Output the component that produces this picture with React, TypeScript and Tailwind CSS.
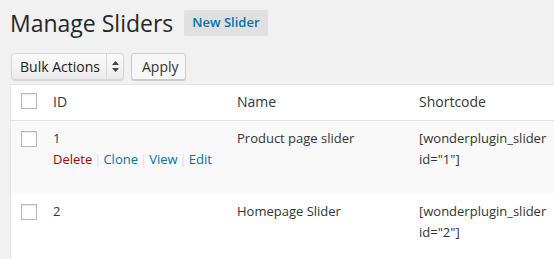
import React from 'react';

interface SliderRow {
  id: number;
  name: string;
}

const rows: SliderRow[] = [
  { id: 1, name: 'Product page slider' },
  { id: 2, name: 'Homepage Slider' },
];

const font = { fontFamily: '"Open Sans", "Noto Sans", sans-serif' };

const Checkbox: React.FC = () => (
  <div className="w-4 h-4 border border-[#b4b9be] bg-white shadow-[inset_0_1px_2px_rgba(0,0,0,0.1)]" />
);

const App: React.FC = () => {
  return (
    <div className="w-[554px] h-[259px] overflow-hidden bg-[#f1f1f1] text-[#333]" style={font}>
      <div className="pl-[10px]">
        {/* Title */}
        <div className="flex items-center h-[44px] pt-[1px]">
          <h1 className="text-[23px] leading-[30px] text-[#23282d] font-normal">Manage Sliders</h1>
          <span className="ml-[11px] h-[26px] px-[8px] flex items-center bg-[#e0e0e0] rounded-[2px] text-[13px] font-semibold text-[#0073aa]">
            New Slider
          </span>
        </div>

        {/* Bulk actions */}
        <div className="flex items-center gap-[7px] mt-[9px] ml-[1px]">
          <div className="flex items-center h-[27px] w-[113px] rounded-[4px] border border-[#d6d6d6] bg-gradient-to-b from-[#fafafa] to-[#ececec] shadow-[0_1px_1px_rgba(0,0,0,0.12)]">
            <span className="pl-[8px] text-[14px] text-[#222] leading-none w-[94px]">Bulk Actions</span>
            <div className="h-full border-l border-[#d6d6d6] flex-1 flex items-center justify-center">
              <svg width="7" height="11" viewBox="0 0 7 11">
                <path d="M3.5 0 L7 4 L0 4 Z" fill="#444" />
                <path d="M0 7 L7 7 L3.5 11 Z" fill="#444" />
              </svg>
            </div>
          </div>
          <button className="h-[27px] px-[10px] w-[55px] rounded-[3px] border border-[#ccc] bg-[#f7f7f7] shadow-[0_1px_0_#ccc] text-[14px] text-[#333] leading-none">
            Apply
          </button>
        </div>

        {/* Table */}
        <div className="mt-[4px] w-[600px] border border-[#e5e5e5] bg-white shadow-[0_1px_1px_rgba(0,0,0,0.04)]">
          <div className="grid grid-cols-[32px_184px_182px_1fr] h-[36px] items-start border-b border-[#e1e1e1] text-[14px] text-[#32373c]">
            <div className="pl-[10px] pt-[8px]"><Checkbox /></div>
            <div className="pl-[10px] pt-[7px] leading-[19px]">ID</div>
            <div className="pl-[10px] pt-[7px] leading-[19px]">Name</div>
            <div className="pl-[10px] pt-[7px] leading-[19px]">Shortcode</div>
          </div>
          {rows.map((r, idx) => (
            <div
              key={r.id}
              className={`grid grid-cols-[32px_184px_182px_1fr] items-start text-[13px] leading-[21px] ${
                idx % 2 === 0 ? 'bg-[#f9f9f9] h-[73px]' : 'bg-white h-[70px]'
              }`}
            >
              <div className="pl-[10px] pt-[10px]"><Checkbox /></div>
              <div className="pl-[10px] pt-[7px]">
                <div>{r.id}</div>
                {idx === 0 && (
                  <div className="text-[#0073aa]">
                    <span className="text-[#a00]">Delete</span>
                    <span className="text-[#ddd] mx-[2px]">|</span>
                    <span>Clone</span>
                    <span className="text-[#ddd] mx-[2px]">|</span>
                    <span>View</span>
                    <span className="text-[#ddd] mx-[2px]">|</span>
                    <span>Edit</span>
                  </div>
                )}
              </div>
              <div className="pl-[10px] pt-[7px]">{r.name}</div>
              <div className="pl-[10px] pt-[7px]">
                <div>[wonderplugin_slider</div>
                <div>id="{r.id}"]</div>
              </div>
            </div>
          ))}
        </div>
      </div>
    </div>
  );
};

export default App;
